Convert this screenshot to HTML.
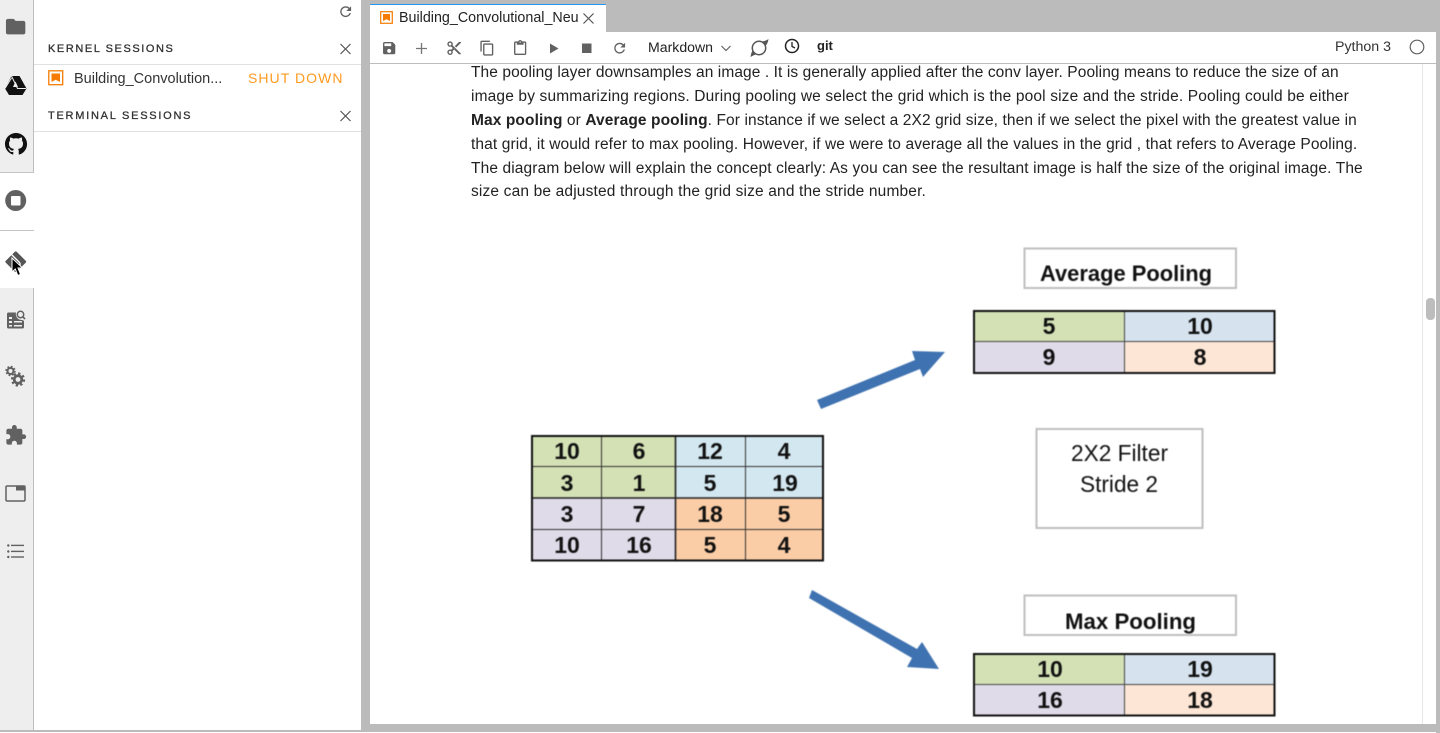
<!DOCTYPE html>
<html><head><meta charset="utf-8"><title>Building_Convolutional_Neu</title>
<style>
html,body{margin:0;padding:0;width:1440px;height:733px;overflow:hidden;background:#fff;font-family:"Liberation Sans",sans-serif;color:#1f1f1f}
.a{position:absolute}
.t{position:absolute;white-space:nowrap}
.h{font-size:11px;letter-spacing:1.62px;color:#333;-webkit-text-stroke:.3px #333;line-height:14px}
.p{left:471px;font-size:15.5px;line-height:24px;color:#222}
</style></head><body>
<div class="a" style="left:0;top:0;width:33px;height:730px;background:#eee"></div>
<div class="a" style="left:33px;top:0;width:1px;height:730px;background:#bdbdbd"></div>
<div class="a" style="left:0;top:173px;width:34px;height:115px;background:#fff"></div>
<div class="a" style="left:0;top:172px;width:34px;height:1px;background:#c4c4c4"></div>
<div class="a" style="left:0;top:230px;width:34px;height:1px;background:#c4c4c4"></div>
<div class="a" style="left:361px;top:0;width:9px;height:730px;background:#bbb"></div>
<div class="a" style="left:370px;top:0;width:1070px;height:32px;background:#bbb"></div>
<div class="a" style="left:370px;top:4px;width:236px;height:28px;background:#fff;border-top:1px solid #2196f3;box-sizing:border-box"></div>
<div class="a" style="left:1436px;top:0;width:4px;height:733px;background:#bbb"></div>
<div class="a" style="left:370px;top:724px;width:1070px;height:8px;background:#bbb"></div>
<div class="a" style="left:0;top:730px;width:1440px;height:2px;background:#bbb"></div>
<div class="a" style="left:370px;top:63px;width:1066px;height:1px;background:#bdbdbd"></div>
<div class="a" style="left:34px;top:64px;width:327px;height:1px;background:#e0e0e0"></div>
<div class="a" style="left:34px;top:131px;width:327px;height:1px;background:#e0e0e0"></div>
<div class="a" style="left:1422px;top:64px;width:1px;height:660px;background:#e6e6e6"></div>
<div class="a" style="left:1426px;top:298px;width:9px;height:22px;background:#bdbdbd;border-radius:4px"></div>

<div class="t h" style="left:48px;top:42px;letter-spacing:1.57px">KERNEL SESSIONS</div>
<div class="t h" style="left:48px;top:109px;letter-spacing:1.75px">TERMINAL SESSIONS</div>
<div class="t" style="left:74px;top:71px;font-size:14.5px;line-height:16px;color:#333">Building_Convolution...</div>
<div class="t" style="left:248px;top:70px;font-size:14px;line-height:16px;color:#ff9a1f;letter-spacing:1.05px">SHUT DOWN</div>
<div class="t" style="left:399px;top:10px;font-size:14.3px;line-height:16px;color:#222">Building_Convolutional_Neu</div>
<div class="t" style="left:648px;top:39px;font-size:14.1px;line-height:16px;color:#222">Markdown</div>
<div class="t" style="left:817px;top:38px;font-size:13px;line-height:16px;font-weight:bold;color:#222">git</div>
<div class="t" style="left:1335px;top:39px;font-size:14.2px;line-height:16px;color:#333">Python 3</div>

<div class="t p" style="top:61px;letter-spacing:.09px">The pooling layer downsamples an image . It is generally applied after the conv layer. Pooling means to reduce the size of an</div>
<div class="t p" style="top:85px;letter-spacing:.15px">image by summarizing regions. During pooling we select the grid which is the pool size and the stride. Pooling could be either</div>
<div class="t p" style="top:109px;letter-spacing:.1px"><b>Max pooling</b> or <b>Average pooling</b>. For instance if we select a 2X2 grid size, then if we select the pixel with the greatest value in</div>
<div class="t p" style="top:133px;letter-spacing:.11px">that grid, it would refer to max pooling. However, if we were to average all the values in the grid , that refers to Average Pooling.</div>
<div class="t p" style="top:157px;letter-spacing:.122px">The diagram below will explain the concept clearly: As you can see the resultant image is half the size of the original image. The</div>
<div class="t p" style="top:180px;letter-spacing:.16px">size can be adjusted through the grid size and the stride number.</div>

<!-- diagram -->
<svg class="a" style="left:0;top:0;filter:blur(.5px)" width="1440" height="733" viewBox="0 0 1440 733" font-family="'Liberation Sans',sans-serif">
<rect x="1024.500" y="248.500" width="211.500" height="39.500" fill="#fff" stroke="#bfbfbf" stroke-width="2"/>
<text x="1040" y="281" font-size="22" font-weight="bold" fill="#111" textLength="172" lengthAdjust="spacingAndGlyphs">Average Pooling</text>
<rect x="1024.500" y="595.500" width="211.500" height="39.500" fill="#fff" stroke="#bfbfbf" stroke-width="2"/>
<text x="1065" y="629" font-size="22" font-weight="bold" fill="#111" textLength="131" lengthAdjust="spacingAndGlyphs">Max Pooling</text>
<rect x="1036.500" y="429" width="166" height="99" fill="#fff" stroke="#bfbfbf" stroke-width="2"/>
<text x="1071" y="461" font-size="23" fill="#111" textLength="97" lengthAdjust="spacingAndGlyphs">2X2 Filter</text>
<text x="1080" y="492" font-size="23" fill="#111" textLength="78" lengthAdjust="spacingAndGlyphs">Stride 2</text>
<polygon points="817,400 915,360 912,351 945,352 923,377 920,369 821,409" fill="#3f72b0"/>
<polygon points="812,590 917,649 922,642 939,669 907,667 912,658 809,598" fill="#3f72b0"/>

<!-- 4x4 -->
<rect x="532" y="436" width="143" height="62" fill="#d3e1b5"/>
<rect x="675" y="436" width="148" height="62" fill="#d3e7f0"/>
<rect x="532" y="498" width="143" height="62" fill="#e0dbe9"/>
<rect x="675" y="498" width="148" height="62" fill="#fbcda6"/>
<g stroke="#333" stroke-width="1" fill="none">
<path d="M601.500 436V560M745.500 436V560M532 466.500H823M532 529.500H823"/>
</g>
<path d="M675.500 436V560M532 498H823" stroke="#222" stroke-width="1.600" fill="none"/>
<rect x="532" y="436" width="291" height="124.500" fill="none" stroke="#111" stroke-width="2"/>
<g font-size="23" font-weight="bold" fill="#111" text-anchor="middle">
<text x="567" y="459">10</text><text x="639" y="459">6</text><text x="710" y="459">12</text><text x="784" y="459">4</text>
<text x="567" y="491">3</text><text x="639" y="491">1</text><text x="710" y="491">5</text><text x="785" y="491">19</text>
<text x="567" y="522">3</text><text x="639" y="522">7</text><text x="710" y="522">18</text><text x="784" y="522">5</text>
<text x="567" y="553">10</text><text x="639" y="553">16</text><text x="710" y="553">5</text><text x="784" y="553">4</text>
</g>

<!-- avg -->
<rect x="974" y="311" width="150" height="31" fill="#d3e1b5"/>
<rect x="1124" y="311" width="150" height="31" fill="#d6e3ef"/>
<rect x="974" y="342" width="150" height="31" fill="#e0dbe9"/>
<rect x="1124" y="342" width="150" height="31" fill="#fde6d5"/>
<path d="M1124.500 311V373M974 341.500H1274" stroke="#444" stroke-width="1" fill="none"/>
<rect x="974" y="311" width="300.500" height="62" fill="none" stroke="#111" stroke-width="2"/>
<g font-size="23" font-weight="bold" fill="#111" text-anchor="middle">
<text x="1049" y="334">5</text><text x="1200" y="334">10</text><text x="1049" y="365">9</text><text x="1200" y="365">8</text>
</g>

<!-- max -->
<rect x="974" y="654" width="150" height="31" fill="#d3e1b5"/>
<rect x="1124" y="654" width="150" height="31" fill="#d6e3ef"/>
<rect x="974" y="685" width="150" height="30" fill="#e0dbe9"/>
<rect x="1124" y="685" width="150" height="30" fill="#fde6d5"/>
<path d="M1124.500 654V715M974 684.500H1274" stroke="#444" stroke-width="1" fill="none"/>
<rect x="974" y="654" width="300.500" height="61.500" fill="none" stroke="#111" stroke-width="2"/>
<g font-size="23" font-weight="bold" fill="#111" text-anchor="middle">
<text x="1050" y="677">10</text><text x="1200" y="677">19</text><text x="1050" y="708">16</text><text x="1200" y="708">18</text>
</g>
</svg>

<!-- icons -->
<svg class="a" style="left:0;top:0;filter:blur(.25px)" width="1440" height="733" viewBox="0 0 1440 733">
<!-- folder -->
<path transform="translate(4 15) scale(.97)" fill="#616161" d="M10 4H4c-1.100 0-1.990.9-1.990 2L2 18c0 1.100.9 2 2 2h16c1.100 0 2-.9 2-2V8c0-1.100-.9-2-2-2h-8l-2-2z"/>
<!-- drive -->
<path fill="#111" d="M11.500 76H19.500L26.500 88.500L22.500 95H9L5 88.500Z"/>
<path fill="none" stroke="#eee" stroke-width="1" d="M11.500 76L17.500 88.500H26M5 88.500L11.500 78"/>
<path fill="#eee" d="M15.500 81.500L13 87H18Z"/>
<!-- github -->
<path transform="translate(4.500 132.500) scale(.96)" fill="#111" d="M12 .5C5.650.5.5 5.650.5 12c0 5.080 3.290 9.390 7.860 10.910.58.1.79-.25.79-.56v-2.140c-3.200.7-3.870-1.360-3.870-1.360-.52-1.330-1.280-1.690-1.280-1.690-1.040-.71.08-.7.08-.7 1.150.08 1.760 1.180 1.760 1.180 1.030 1.760 2.690 1.250 3.350.96.1-.74.4-1.250.73-1.540-2.550-.29-5.240-1.280-5.240-5.690 0-1.260.45-2.280 1.180-3.090-.12-.29-.51-1.460.11-3.050 0 0 .96-.31 3.150 1.180a10.900 10.900 0 0 1 5.740 0c2.190-1.490 3.150-1.180 3.150-1.180.62 1.590.23 2.760.11 3.050.73.81 1.180 1.830 1.180 3.090 0 4.420-2.690 5.390-5.260 5.680.41.36.78 1.060.78 2.140v3.170c0 .31.21.67.8.56A11.500 11.500 0 0 0 23.500 12C23.500 5.650 18.350.5 12 .5z"/>
<!-- stop -->
<circle cx="15.700" cy="200.500" r="10.500" fill="#616161"/>
<rect x="11" y="196" width="9.500" height="9.500" rx="1" fill="#fff"/>
<!-- git -->
<rect x="8" y="254" width="15.500" height="15.500" rx="1.500" transform="rotate(45 15.750 261.750)" fill="#555"/>
<path d="M11.500 254.500L20 263M20 263V266" stroke="#fff" stroke-width="1.300" fill="none"/>
<polygon points="12,258 12,272 15.300,269 17.800,275.500 20.500,274.300 18,268 22.500,268" fill="#000" stroke="#fff" stroke-width="1"/>
<!-- news search -->
<path fill="#616161" d="M7 312.500h9a6 6 0 0 0 6.500 7.500l1.500 1v6a1.500 1.500 0 0 1-1.500 1.500h-14a1.500 1.500 0 0 1-1.500-1.500V314a1.500 1.500 0 0 1 1-1.500z"/>
<path d="M9 317h3v2H9zM9 321h3v2H9zM9 325h3v1.500H9zM14 321h8v1.500h-8zM14 325h8v1.500h-8z" fill="#eee"/>
<circle cx="20.500" cy="314.500" r="3.200" fill="none" stroke="#616161" stroke-width="1.500"/>
<path d="M22.800 316.800L25 319" stroke="#616161" stroke-width="1.700"/>
<!-- gears -->
<circle cx="10.500" cy="371" r="3" fill="none" stroke="#616161" stroke-width="2"/>
<circle cx="10.500" cy="371" r="4.300" fill="none" stroke="#616161" stroke-width="1.800" stroke-dasharray="1.700 1.700"/>
<circle cx="18" cy="379.500" r="3.800" fill="none" stroke="#616161" stroke-width="2.800"/>
<circle cx="18" cy="379.500" r="6" fill="none" stroke="#616161" stroke-width="2.200" stroke-dasharray="2.300 2.400"/>
<!-- puzzle -->
<path transform="translate(4.500 424) scale(.94)" fill="#616161" d="M20.500 11H19V7c0-1.100-.9-2-2-2h-4V3.500C13 2.120 11.880 1 10.500 1S8 2.120 8 3.500V5H4c-1.100 0-1.990.9-1.990 2v3.800H3.500c1.490 0 2.700 1.210 2.700 2.700s-1.210 2.700-2.700 2.700H2V20c0 1.100.9 2 2 2h3.800v-1.500c0-1.490 1.210-2.700 2.700-2.700 1.490 0 2.700 1.210 2.700 2.700V22H17c1.100 0 2-.9 2-2v-4h1.500c1.380 0 2.500-1.120 2.500-2.500S21.880 11 20.500 11z"/>
<!-- tabs -->
<rect x="6" y="486" width="19" height="15" rx="1.200" fill="none" stroke="#616161" stroke-width="1.500"/>
<rect x="16" y="485.500" width="9.500" height="5" fill="#616161"/>
<!-- list -->
<g fill="#616161"><circle cx="8.300" cy="545.500" r="1.200"/><circle cx="8.300" cy="551.500" r="1.200"/><circle cx="8.300" cy="557" r="1.200"/>
<rect x="11" y="544.700" width="13" height="1.400"/><rect x="11" y="550.700" width="13" height="1.400"/><rect x="11" y="556.300" width="13" height="1.400"/></g>

<!-- sidebar refresh -->
<path transform="translate(337.500 3.500) scale(.68)" fill="#616161" d="M17.650 6.350C16.200 4.900 14.210 4 12 4c-4.420 0-7.990 3.580-7.990 8s3.570 8 7.990 8c3.730 0 6.840-2.550 7.730-6h-2.080c-.82 2.330-3.040 4-5.650 4-3.310 0-6-2.690-6-6s2.690-6 6-6c1.660 0 3.140.69 4.220 1.780L13 11h7V4l-2.350 2.350z"/>
<!-- close -->
<g stroke="#555" stroke-width="1.200" fill="none">
<path d="M340.500 44L350.500 54M350.500 44L340.500 54M340.500 111L350.500 121M350.500 111L340.500 121"/>
<path d="M583.500 13.500L593.500 23.500M593.500 13.500L583.500 23.500"/>
</g>
<!-- notebook icons -->
<rect x="48.800" y="70.800" width="13.900" height="13.900" fill="#fff" stroke="#f57c00" stroke-width="1.300"/>
<path d="M51.500 73.500h8.500v8.500l-4.250-2.200L51.500 82z" fill="#f57c00"/>
<rect x="380.700" y="11.700" width="11.600" height="11.600" fill="#fff" stroke="#f57c00" stroke-width="1.200"/>
<path d="M383 14h7v7l-3.500-1.800L383 21z" fill="#f57c00"/>
<!-- toolbar -->
<path transform="translate(381 40) scale(.68)" fill="#616161" d="M17 3H5c-1.110 0-2 .9-2 2v14c0 1.100.89 2 2 2h14c1.100 0 2-.9 2-2V7l-4-4zm-5 16c-1.660 0-3-1.340-3-3s1.340-3 3-3 3 1.340 3 3-1.340 3-3 3zm3-10H5V5h10v4z"/>
<path d="M421.500 43V54M416 48.500H427" stroke="#757575" stroke-width="1.300" fill="none"/>
<path transform="translate(446 40) scale(.68)" fill="#616161" d="M9.640 7.640c.23-.5.36-1.050.36-1.640 0-2.210-1.790-4-4-4S2 3.790 2 6s1.790 4 4 4c.59 0 1.140-.13 1.640-.36L10 12l-2.360 2.360C7.140 14.130 6.590 14 6 14c-2.210 0-4 1.790-4 4s1.790 4 4 4 4-1.790 4-4c0-.59-.13-1.140-.36-1.640L12 14l7 7h3v-1L9.640 7.640zM6 8c-1.100 0-2-.89-2-2s.9-2 2-2 2 .89 2 2-.9 2-2 2zm0 12c-1.100 0-2-.89-2-2s.9-2 2-2 2 .89 2 2-.9 2-2 2zm6-7.500c-.28 0-.5-.22-.5-.5s.22-.5.5-.5.5.22.5.5-.22.5-.5.5zM19 3l-6 6 2 2 7-7V3h-3z"/>
<path transform="translate(479 40) scale(.68)" fill="#616161" d="M16 1H4c-1.100 0-2 .9-2 2v14h2V3h12V1zm3 4H8c-1.100 0-2 .9-2 2v14c0 1.100.9 2 2 2h11c1.100 0 2-.9 2-2V7c0-1.100-.9-2-2-2zm0 16H8V7h11v14z"/>
<path transform="translate(512 40) scale(.68)" fill="#616161" d="M19 2h-4.180C14.400.84 13.300 0 12 0c-1.300 0-2.400.84-2.820 2H5c-1.100 0-2 .9-2 2v16c0 1.100.9 2 2 2h14c1.100 0 2-.9 2-2V4c0-1.100-.9-2-2-2zm-7 0c.55 0 1 .45 1 1s-.45 1-1 1-1-.45-1-1 .45-1 1-1zm7 18H5V4h2v3h10V4h2v16z"/>
<path d="M550 43.500L558.500 48.500L550 53.500Z" fill="#616161"/>
<rect x="582" y="43.500" width="9.500" height="9.500" fill="#616161"/>
<path transform="translate(611.500 40) scale(.68)" fill="#616161" d="M17.650 6.350C16.200 4.900 14.210 4 12 4c-4.420 0-7.990 3.580-7.990 8s3.570 8 7.990 8c3.730 0 6.840-2.550 7.730-6h-2.080c-.82 2.330-3.040 4-5.650 4-3.310 0-6-2.690-6-6s2.690-6 6-6c1.660 0 3.140.69 4.220 1.780L13 11h7V4l-2.350 2.350z"/>
<path d="M721.500 46L726 50.500L730.500 46" stroke="#616161" stroke-width="1.200" fill="none"/>
<!-- swirl -->
<circle cx="759" cy="48" r="6.700" fill="none" stroke="#555" stroke-width="1.500"/>
<path d="M762 41.500Q766 41 768.500 39Q768 43 765.500 46ZM755.500 54.500Q753 55.500 750.500 57Q750.800 53.500 752.500 50.500Z" fill="#555"/>
<!-- clock -->
<circle cx="792" cy="46" r="6.500" fill="none" stroke="#222" stroke-width="1.500"/>
<path d="M792 42V46.500L795 48" stroke="#222" stroke-width="1.300" fill="none"/>
<!-- kernel status -->
<circle cx="1417" cy="47" r="6.800" fill="none" stroke="#616161" stroke-width="1.200"/>
</svg>
</body></html>
